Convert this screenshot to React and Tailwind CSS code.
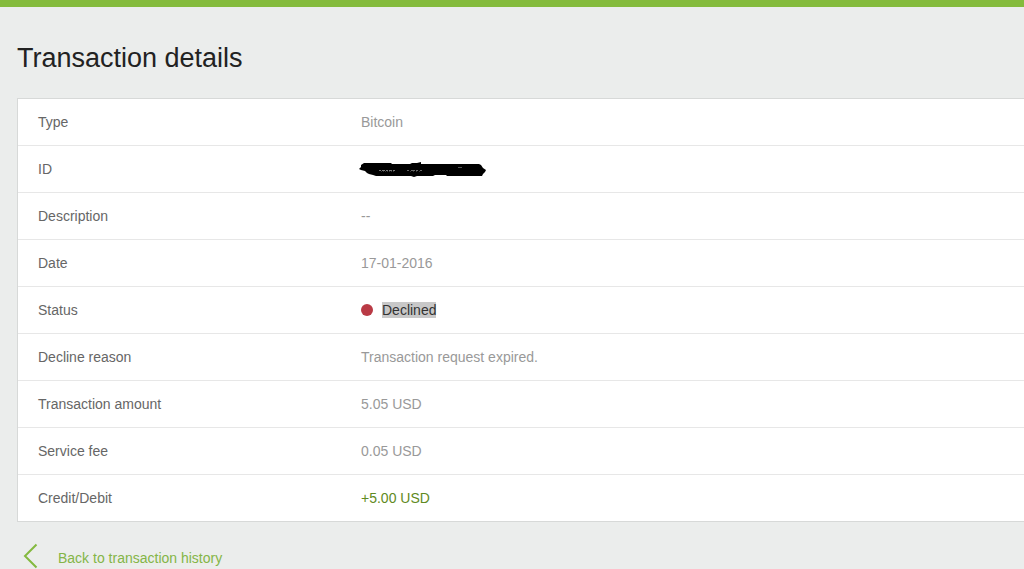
import React from "react";

const rows = [
  { label: "Type", value: "Bitcoin" },
  { label: "ID", value: <RedactedId /> },
  { label: "Description", value: "--" },
  { label: "Date", value: "17-01-2016" },
  { label: "Status", value: <DeclinedStatus /> },
  { label: "Decline reason", value: "Transaction request expired." },
  { label: "Transaction amount", value: "5.05 USD" },
  { label: "Service fee", value: "0.05 USD" },
  { label: "Credit/Debit", value: "+5.00 USD", color: "text-[#5f8a22]" },
];

// Marker scribble over the transaction id
function RedactedId() {
  return (
    <svg
      width="128"
      height="20"
      viewBox="0 0 128 20"
      className="-ml-0.5"
      role="img"
      aria-label="Hidden"
    >
      <path
        d="M0 10 L2 8 L2 6 L5 4 L32 4 L33 5 L51 5 L53 4 L58 4 L62 3 L62 5 L80 5 L98 5 L102 5 L112 5 L120 5 L122 6 L124 9 L127 11 L126 13 L124 15 L123 17 L109 17 L88 17 L87 16 L76 16 L74 17 L58 17 L55 18 L52 17 L17 17 L14 16 L10 15 L8 14 L6 12 L2 11 Z"
        fill="#000"
      />
      <path d="M20 11.5 H36" stroke="#777" strokeDasharray="2 1 3 1" />
      <path d="M22 12.5 H35" stroke="#333" strokeDasharray="1 1" />
      <path d="M48 11.5 H63" stroke="#666" strokeDasharray="2 2 4 1" />
      <path d="M51 12.5 H61" stroke="#333" strokeDasharray="1 2" />
      <path d="M99 8.5 H103" stroke="#555" />
    </svg>
  );
}

function DeclinedStatus() {
  return (
    <span className="flex items-center">
      <span className="h-3 w-3 rounded-full bg-[#b93a45]" />
      <span className="ml-[9px] bg-[#c8c8c8] leading-4 text-[#333333]">
        Declined
      </span>
    </span>
  );
}

const App = () => {
  return (
    <div className="min-h-screen border-t-[7px] border-[#84bb3c] bg-[#ebedec] pl-[17px] font-['Liberation_Sans',Arial,sans-serif] text-sm">
      <main className="pt-8">
        <h1 className="text-[27px] leading-[38px] text-[#222222]">
          Transaction details
        </h1>

        <div className="mt-[21px] border-y border-l border-[#d7d9d8] bg-white">
          <table className="w-full table-fixed">
            <tbody>
              {rows.map((row) => (
                <tr
                  key={row.label}
                  className="border-b border-[#e7e7e7] last:border-b-0"
                >
                  <th
                    scope="row"
                    className="w-[323px] py-3 pl-5 text-left leading-[22px] font-normal text-[#666666]"
                  >
                    {row.label}
                  </th>
                  <td
                    className={`py-3 pl-5 leading-[22px] ${row.color || "text-[#999999]"}`}
                  >
                    {row.value}
                  </td>
                </tr>
              ))}
            </tbody>
          </table>
        </div>

        <a
          href="#history"
          className="mt-[21px] flex w-fit items-start pl-1.5 text-[#84b547]"
        >
          <svg
            width="16"
            height="26"
            viewBox="0 0 16 26"
            fill="none"
            stroke="#84b93f"
            strokeWidth="2"
            aria-hidden="true"
          >
            <path d="M13.5 1.5 L2 13 L13.5 24.5" />
          </svg>
          <span className="ml-[19px] pt-1 leading-[22px]">
            Back to transaction history
          </span>
        </a>
      </main>
    </div>
  );
};

export default App;
